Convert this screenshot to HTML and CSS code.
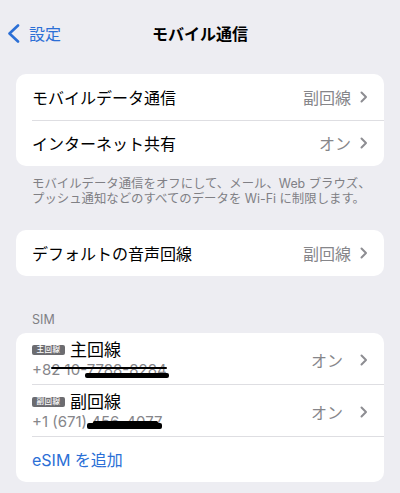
FILE: index.html
```html
<!DOCTYPE html>
<html lang="ja">
	<head>
		<meta charset="UTF-8">
		<title>モバイル通信</title>
		<link rel="stylesheet" href="styles.css">
	</head>
	<body>
		<div class="nav">
			<a class="back" href="#">
				<svg class="back-icon" width="13" height="19" viewBox="0 0 13 19"><path d="M11 1.5 L2.5 9.5 L11 17.5" fill="none" stroke="currentColor" stroke-width="2.6" stroke-linecap="round" stroke-linejoin="round"/></svg>
				<span>設定</span>
			</a>
			<h1 class="title">モバイル通信</h1>
			<div></div>
		</div>

		<!-- データ通信 -->
		<ul class="group first">
			<li class="row">
				<span class="label">モバイルデータ通信</span>
				<span class="value">副回線</span>
				<svg class="chev" width="8" height="12" viewBox="0 0 8 12"><path d="M1.5 1.5 L6 6 L1.5 10.5" fill="none" stroke="currentColor" stroke-width="2" stroke-linecap="round" stroke-linejoin="round"/></svg>
			</li>
			<li class="row">
				<span class="label">インターネット共有</span>
				<span class="value">オン</span>
				<svg class="chev" width="8" height="12" viewBox="0 0 8 12"><path d="M1.5 1.5 L6 6 L1.5 10.5" fill="none" stroke="currentColor" stroke-width="2" stroke-linecap="round" stroke-linejoin="round"/></svg>
			</li>
		</ul>
		<p class="note">モバイルデータ通信をオフにして、メール、Web ブラウズ、<br>プッシュ通知などのすべてのデータを Wi-Fi に制限します。</p>

		<!-- 音声回線 -->
		<ul class="group second">
			<li class="row">
				<span class="label">デフォルトの音声回線</span>
				<span class="value">副回線</span>
				<svg class="chev" width="8" height="12" viewBox="0 0 8 12"><path d="M1.5 1.5 L6 6 L1.5 10.5" fill="none" stroke="currentColor" stroke-width="2" stroke-linecap="round" stroke-linejoin="round"/></svg>
			</li>
		</ul>

		<!-- SIM -->
		<h2 class="head">SIM</h2>
		<ul class="group">
			<li class="row sim">
				<div class="sim-info">
					<div class="sim-name"><b class="badge">主回線</b>主回線</div>
					<div class="phone">+8<span class="hide one">2 10-7788-8284</span></div>
				</div>
				<span class="value">オン</span>
				<svg class="chev" width="8" height="12" viewBox="0 0 8 12"><path d="M1.5 1.5 L6 6 L1.5 10.5" fill="none" stroke="currentColor" stroke-width="2" stroke-linecap="round" stroke-linejoin="round"/></svg>
			</li>
			<li class="row sim">
				<div class="sim-info">
					<div class="sim-name"><b class="badge">副回線</b>副回線</div>
					<div class="phone">+1 (671) <span class="hide two">456-4077</span></div>
				</div>
				<span class="value">オン</span>
				<svg class="chev" width="8" height="12" viewBox="0 0 8 12"><path d="M1.5 1.5 L6 6 L1.5 10.5" fill="none" stroke="currentColor" stroke-width="2" stroke-linecap="round" stroke-linejoin="round"/></svg>
			</li>
			<li class="row add">
				<a href="#">eSIM を追加</a>
			</li>
		</ul>
	</body>
</html>
```

FILE: styles.css
```css
*{margin:0;padding:0;box-sizing:border-box;}
ul{list-style:none;}
a{text-decoration:none;}
html,body{height:100%;}
body{
	background:#ededf2;
	padding:0 16px;
	font-family:Inter,"Noto Sans CJK JP",sans-serif;
	color:#000;
	overflow:hidden;
}
.nav{
	height:66px;
	display:grid;
	grid-template-columns:1fr auto 1fr;
	align-items:center;
	margin:0 -16px;
	padding:0 7px;
}
.back{
	display:flex;
	align-items:center;
	gap:9px;
	color:#2b6fd6;
	font-size:16px;
}
.back-icon{display:block;}
.title{
	font-size:16px;
	font-weight:700;
}
.group{
	background:#fff;
	border-radius:10px;
	overflow:hidden;
}
.first{margin-top:8px;}
.second{margin-top:24px;}
.row{
	display:flex;
	align-items:center;
	height:46px;
	padding:0 16px;
	position:relative;
	font-size:16px;
}
.row+.row::before{
	content:"";
	position:absolute;
	top:0;
	left:16px;
	right:0;
	height:1px;
	background:#dedee2;
}
.label{flex:1;}
.value{
	color:#86868a;
	margin-right:9px;
}
.chev{
	display:block;
	color:#8d8d92;
}
.note{
	font-size:12.4px;
	line-height:15px;
	color:#808085;
	padding:10px 16px 0;
	white-space:nowrap;
}
.head{
	font-size:12.5px;
	font-weight:400;
	color:#808085;
	line-height:15px;
	padding:0 16px;
	margin:36px 0 6px;
}
.sim{
	height:auto;
	padding-top:7px;
	padding-bottom:4px;
}
.row.sim:nth-child(2){padding-top:8px;}
.sim .value{margin-right:17px;}
.sim-info{flex:1;}
.sim-name{
	display:flex;
	align-items:center;
	font-size:17px;
	line-height:20px;
}
.badge{
	font-weight:500;
	font-size:7.5px;
	line-height:10px;
	height:10px;
	width:33px;
	text-align:center;
	border-radius:2px;
	background:#6c6c70;
	color:#fff;
	margin-right:5px;
	letter-spacing:0.5px;
}
.phone{
	font-size:15px;
	line-height:20px;
	color:#86868a;
}
.hide{position:relative;}
.hide::before,.hide::after{
	content:"";
	position:absolute;
	background:#000;
	border-radius:2px;
}
.one::before{
	left:0;
	right:0;
	top:7px;
	height:2px;
}
.one::after{
	left:34px;
	right:-2px;
	top:13px;
	height:5px;
}
.two::before{
	left:-4px;
	right:0;
	top:11px;
	height:6px;
}
.two::after{
	left:2px;
	right:4px;
	top:9px;
	height:3px;
}
.add a{
	color:#2b6fd6;
	font-size:16px;
}
```
